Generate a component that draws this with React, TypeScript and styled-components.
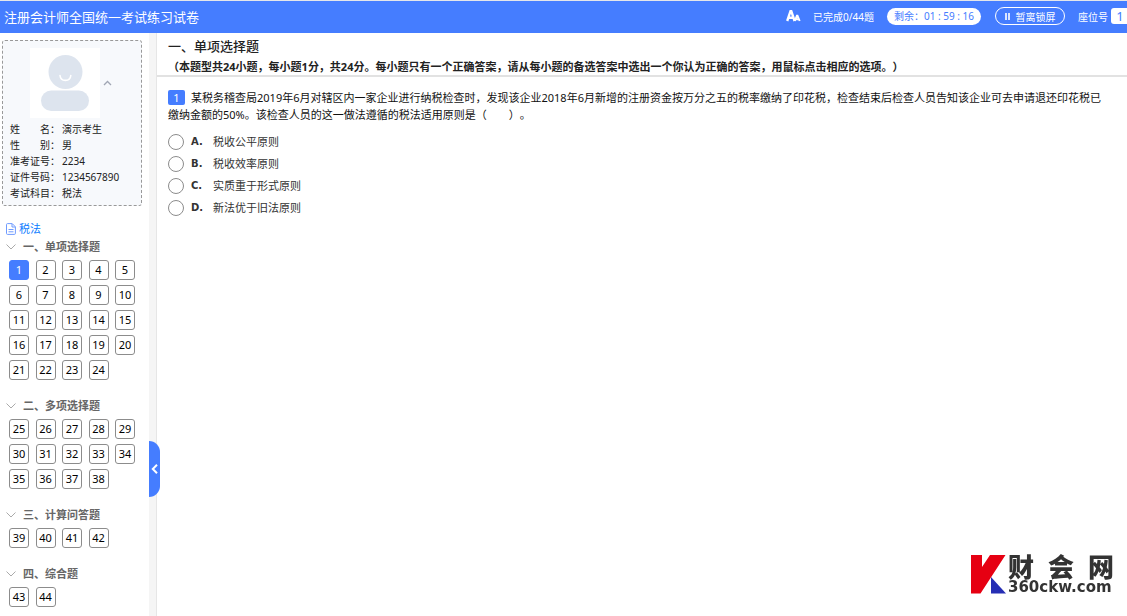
import React, { useState } from 'react';
import styled, { createGlobalStyle } from 'styled-components';

const BLUE = '#457dff';

const GlobalStyle = createGlobalStyle`
  * { box-sizing: border-box; }
  body {
    margin: 0;
    background: #fff;
    color: #222;
    font-family: "Noto Sans", "Noto Sans CJK SC", sans-serif;
    font-size: 11px;
    text-spacing-trim: space-all;
  }
  button, input { font-family: inherit; margin: 0; }
  button { cursor: pointer; }
  h1, h2, h3, p, dl, dd, fieldset { margin: 0; padding: 0; border: 0; }
`;

const Page = styled.div`
  display: flex;
  flex-direction: column;
  min-height: 100vh;
`;

const TopBar = styled.header`
  display: flex;
  align-items: center;
  height: 33px;
  padding: 0 0 2px 4px;
  border-top: 1px solid #e4e6ea;
  background: ${BLUE};
  color: #fff;
  font-size: 10px;
  white-space: nowrap;
`;

const PaperTitle = styled.h1`
  flex: 1;
  font-size: 13px;
  font-weight: 400;
`;

const FontSizeButton = styled.button`
  display: flex;
  margin-right: 12px;
  padding: 0;
  border: 0;
  background: none;
  color: #fff;
`;

const TimePill = styled.span`
  width: 94px;
  margin: 0 14px 0 13px;
  border-radius: 9px;
  background: #fff;
  color: ${BLUE};
  line-height: 17px;
  text-align: center;
`;

const LockButton = styled.button`
  display: flex;
  align-items: center;
  justify-content: center;
  gap: 6px;
  width: 70px;
  height: 18px;
  margin-right: 13px;
  padding: 0;
  border: 1px solid #fff;
  border-radius: 9px;
  background: none;
  color: #fff;
  font-size: 10px;
`;

const SeatNumber = styled.span`
  width: 16px;
  margin-left: 3px;
  padding-left: 2px;
  border-radius: 3px 0 0 3px;
  background: #fff;
  color: ${BLUE};
  font-size: 13px;
  line-height: 16px;
  text-align: center;
`;

const Body = styled.div`
  position: relative;
  display: flex;
  flex: 1;
`;

const Sidebar = styled.aside`
  flex: none;
  width: 157px;
  padding: 7px 7px 8px 2px;
  border-right: 1px solid #e6e6e6;
  background: linear-gradient(to left, #f5f5f5 7px, #fff 7px);
`;

const Candidate = styled.section`
  width: 140px;
  padding: 7px 0 4px;
  border: 1px dashed #999;
  border-radius: 3px;
  background: #f7f9fc;
`;

const PhotoRow = styled.div`
  display: flex;
  align-items: center;
  gap: 3px;
  padding-left: 27px;
`;

const CaretButton = styled.button`
  display: flex;
  padding: 0;
  border: 0;
  background: none;
`;

const InfoList = styled.dl`
  display: grid;
  grid-template-columns: 52px 1fr;
  margin-top: 3px;
  padding-left: 7px;
  font-size: 10px;
  line-height: 16px;
  white-space: nowrap;
`;

const InfoLabel = styled.dt`
  display: flex;
`;

const LabelText = styled.span`
  display: flex;
  justify-content: space-between;
  width: 40px;
`;

const SubjectLink = styled.a`
  display: flex;
  align-items: center;
  gap: 3px;
  margin: 15px 0 2px 4px;
  color: #0a7cff;
  line-height: 16px;
  text-decoration: none;
`;

const Group = styled.section`
  padding: 0 0 18px 4px;
  &:last-child { padding-bottom: 0; }
`;

const GroupTitle = styled.h3`
  display: flex;
  align-items: center;
  gap: 7px;
  margin-bottom: 5px;
  color: #666;
  font-size: 11px;
  font-weight: 700;
  line-height: 16px;
`;

const NumberGrid = styled.div`
  display: grid;
  grid-template-columns: repeat(5, 20px);
  justify-content: space-between;
  row-gap: 5px;
  width: 126px;
  margin-left: 3px;
`;

const NumberButton = styled.button<{ $active: boolean }>`
  height: 20px;
  padding: 0;
  border: 1px solid ${(p) => (p.$active ? BLUE : '#8c8c8c')};
  border-radius: 3px;
  background: ${(p) => (p.$active ? BLUE : '#fff')};
  color: ${(p) => (p.$active ? '#fff' : '#000')};
  font-size: 11px;
  line-height: 18px;
  text-align: center;
`;

const CollapseHandle = styled.button`
  position: absolute;
  top: 70%;
  left: 149px;
  display: flex;
  align-items: center;
  justify-content: center;
  width: 11px;
  height: 56px;
  padding: 0;
  border: 0;
  border-radius: 0 11px 11px 0;
  background: ${BLUE};
`;

const Main = styled.main`
  flex: 1;
  min-width: 0;
`;

const SectionHeader = styled.header`
  padding: 3px 11px 0;
  border-bottom: 2px solid #e2e2e2;
`;

const SectionTitle = styled.h2`
  margin-bottom: 3px;
  font-size: 13px;
  font-weight: 500;
  line-height: 20px;
`;

const SectionNote = styled.p`
  font-weight: 700;
  line-height: 16px;
`;

const Question = styled.article`
  padding: 12px 16px 0 11px;
`;

const Stem = styled.p`
  color: #111;
  line-height: 17px;
`;

const Badge = styled.span`
  display: inline-block;
  width: 17px;
  margin-right: 6px;
  border-radius: 2px;
  background: ${BLUE};
  color: #fff;
  line-height: 15px;
  text-align: center;
`;

const Options = styled.fieldset`
  display: grid;
  gap: 6px;
  margin-top: 11px;
`;

const Option = styled.label`
  display: grid;
  grid-template-columns: 23px 22px 1fr;
  align-items: center;
  color: #333;
  line-height: 16px;
`;

const Radio = styled.input`
  appearance: none;
  width: 16px;
  height: 16px;
  border: 1px solid #8c8c8c;
  border-radius: 50%;
  background: #fff;
  &:checked { border: 5px solid ${BLUE}; }
`;

const OptionLetter = styled.b`
  font-family: "DejaVu Sans", sans-serif;
  font-size: 10px;
`;

const Brand = styled.div`
  position: fixed;
  right: 13px;
  bottom: 22px;
  display: flex;
  align-items: center;
  gap: 2px;
  color: #333;
`;

const BrandText = styled.div`
  width: 106px;
`;

const BrandName = styled.div`
  display: flex;
  justify-content: space-between;
  font-size: 26px;
  font-weight: 900;
  line-height: 26px;
`;

const BrandSite = styled.div`
  font-family: "DejaVu Sans", sans-serif;
  font-size: 15px;
  font-weight: 700;
  line-height: 14px;
`;

const candidate = [
  ['姓名', '演示考生'],
  ['性别', '男'],
  ['准考证号', '2234'],
  ['证件号码', '1234567890'],
  ['考试科目', '税法'],
];

const groups = [
  { title: '一、单项选择题', from: 1, to: 24 },
  { title: '二、多项选择题', from: 25, to: 38 },
  { title: '三、计算问答题', from: 39, to: 42 },
  { title: '四、综合题', from: 43, to: 44 },
];

const options = [
  ['A', '税收公平原则'],
  ['B', '税收效率原则'],
  ['C', '实质重于形式原则'],
  ['D', '新法优于旧法原则'],
];

const range = (from: number, to: number) =>
  Array.from({ length: to - from + 1 }, (_, i) => from + i);

function FontIcon() {
  return (
    <svg width="15" height="12" viewBox="0 0 15 12" fill="none" stroke="#fff">
      <path d="M1.200 11 4.500 1.200h.8L8.600 11M2.400 7.800h5" strokeWidth="2.400" />
      <path d="M8.800 11 10.900 5.600h.6L13.700 11M9.800 9.200h3" strokeWidth="1.900" />
    </svg>
  );
}

function Avatar() {
  return (
    <svg width="70" height="70" viewBox="0 0 70 70" role="img" aria-label="考生照片">
      <rect width="70" height="70" fill="#fff" />
      <circle cx="35.500" cy="24" r="17" fill="#dde4ee" />
      <rect x="11" y="42.500" width="48" height="20.500" rx="10.200" fill="#dde4ee" />
      <path d="M30 27.500c.6 6.500 10.200 6.500 10.800 0" fill="none" stroke="#fff" strokeWidth="1.600" strokeLinecap="round" />
    </svg>
  );
}

export default function App() {
  const [current, setCurrent] = useState(1);
  const [answer, setAnswer] = useState('');

  return (
    <Page lang="zh-CN">
      <GlobalStyle />
      <TopBar>
        <PaperTitle>注册会计师全国统一考试练习试卷</PaperTitle>
        <FontSizeButton aria-label="字体大小"><FontIcon /></FontSizeButton>
        <span>已完成0/44题</span>
        <TimePill>剩余：01 : 59 : 16</TimePill>
        <LockButton>
          <svg width="5" height="7" viewBox="0 0 5 7" fill="#fff" fillOpacity="0.8">
            <path d="M0 0h2v7H0zM3 0h2v7H3z" />
          </svg>
          暂离锁屏
        </LockButton>
        <span>座位号</span>
        <SeatNumber>1</SeatNumber>
      </TopBar>

      <Body>
        <Sidebar>
          <Candidate>
            <PhotoRow>
              <Avatar />
              <CaretButton aria-label="收起">
                <svg width="9" height="6" viewBox="0 0 9 6" fill="none" stroke="#a0a6b4" strokeWidth="1.300">
                  <path d="M1 5 4.500 1.500 8 5" />
                </svg>
              </CaretButton>
            </PhotoRow>
            <InfoList>
              {candidate.map(([label, value]) => (
                <React.Fragment key={label}>
                  <InfoLabel>
                    <LabelText>
                      {label.length === 2
                        ? label.split('').map((c) => <span key={c}>{c}</span>)
                        : label}
                    </LabelText>
                    ：
                  </InfoLabel>
                  <dd>{value}</dd>
                </React.Fragment>
              ))}
            </InfoList>
          </Candidate>

          <SubjectLink href="#subject">
            <svg width="10" height="12" viewBox="0 0 10 12" fill="none" stroke="#6f9bff">
              <path d="M1.500.6h4.700L9.400 3.800v6.600a1 1 0 0 1-1 1H1.500a1 1 0 0 1-1-1V1.600a1 1 0 0 1 1-1zM6 .8V4h3.200M2.500 6.500h5M2.500 8.800h5" />
            </svg>
            税法
          </SubjectLink>

          {groups.map((g) => (
            <Group key={g.title}>
              <GroupTitle>
                <svg width="10" height="6" viewBox="0 0 10 6" fill="none" stroke="#aaa">
                  <path d="M.5.5 5 5 9.500.5" />
                </svg>
                {g.title}
              </GroupTitle>
              <NumberGrid>
                {range(g.from, g.to).map((n) => (
                  <NumberButton key={n} $active={n === current} onClick={() => setCurrent(n)}>
                    {n}
                  </NumberButton>
                ))}
              </NumberGrid>
            </Group>
          ))}
        </Sidebar>

        <Main>
          <SectionHeader>
            <SectionTitle>一、单项选择题</SectionTitle>
            <SectionNote>
              （本题型共24小题，每小题1分，共24分。每小题只有一个正确答案，请从每小题的备选答案中选出一个你认为正确的答案，用鼠标点击相应的选项。）
            </SectionNote>
          </SectionHeader>
          <Question>
            <Stem>
              <Badge>1</Badge>
              某税务稽查局2019年6月对辖区内一家企业进行纳税检查时，发现该企业2018年6月新增的注册资金按万分之五的税率缴纳了印花税，检查结束后检查人员告知该企业可去申请退还印花税已缴纳金额的50%。该检查人员的这一做法遵循的税法适用原则是（　　）。
            </Stem>
            <Options aria-label="选项">
              {options.map(([letter, text]) => (
                <Option key={letter}>
                  <Radio
                    type="radio"
                    name="answer"
                    value={letter}
                    checked={answer === letter}
                    onChange={() => setAnswer(letter)}
                  />
                  <OptionLetter>{letter}.</OptionLetter>
                  <span>{text}</span>
                </Option>
              ))}
            </Options>
          </Question>
        </Main>

        <CollapseHandle aria-label="收起侧栏">
          <svg width="7" height="10" viewBox="0 0 7 10" fill="none" stroke="#fff" strokeWidth="2">
            <path d="M6 .8 1.800 5 6 9.200" />
          </svg>
        </CollapseHandle>
      </Body>

      <Brand>
        <svg width="35" height="39" viewBox="0 0 35 39">
          <path d="M0 0h11v12L19 0h15.500L9.500 38.500H0z" fill="#e60012" />
          <path d="M20 22 35 38.500H20z" fill="#262eb4" />
        </svg>
        <BrandText>
          <BrandName><span>财</span><span>会</span><span>网</span></BrandName>
          <BrandSite>360ckw.com</BrandSite>
        </BrandText>
      </Brand>
    </Page>
  );
}
